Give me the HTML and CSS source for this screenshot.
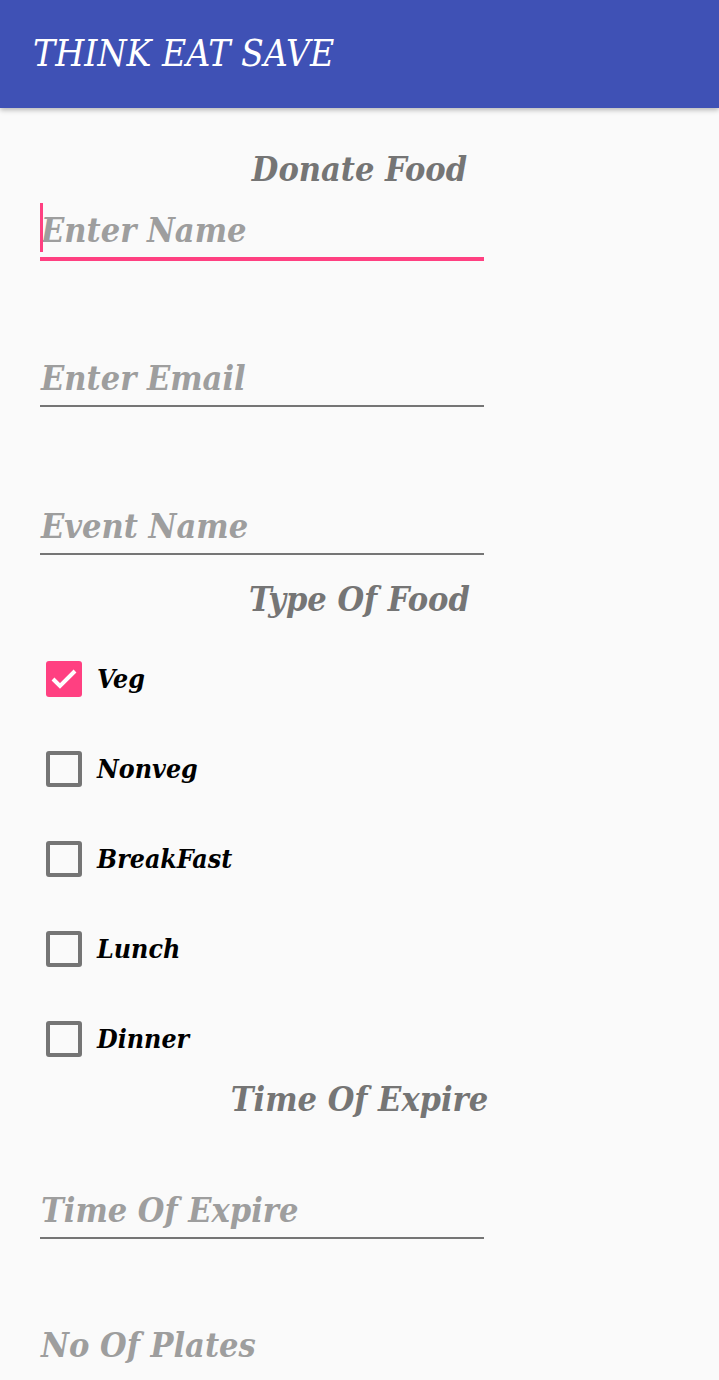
FILE: index.html
```html
<!DOCTYPE html>
<html lang="en">
<head>
<meta charset="utf-8">
<title>Think Eat Save</title>
<link rel="stylesheet" href="styles.css">
</head>
<body>
<header class="appbar">
  <h1 class="appbar-title">THINK EAT SAVE</h1>
</header>
<main class="form">
  <h2 class="section-title">Donate Food</h2>
  <div class="field field-first">
    <div class="input input-focused"><span class="hint">Enter Name</span></div>
  </div>
  <div class="field">
    <div class="input"><span class="hint">Enter Email</span></div>
  </div>
  <div class="field">
    <div class="input"><span class="hint">Event Name</span></div>
  </div>
  <h2 class="section-title section-type">Type Of Food</h2>
  <ul class="checks">
    <li class="check-row">
      <span class="box box-checked">
        <svg viewBox="0 0 36 36" width="36" height="36"><polyline points="7,18 14,25 29,10" fill="none" stroke="#ffffff" stroke-width="4"/></svg>
      </span>
      <span class="check-label">Veg</span>
    </li>
    <li class="check-row"><span class="box"></span><span class="check-label">Nonveg</span></li>
    <li class="check-row"><span class="box"></span><span class="check-label">BreakFast</span></li>
    <li class="check-row"><span class="box"></span><span class="check-label">Lunch</span></li>
    <li class="check-row"><span class="box"></span><span class="check-label">Dinner</span></li>
  </ul>
  <h2 class="section-title">Time Of Expire</h2>
  <div class="field field-time">
    <div class="input"><span class="hint">Time Of Expire</span></div>
  </div>
  <div class="field field-plates">
    <div class="input input-tall"><span class="hint">No Of Plates</span></div>
  </div>
</main>
</body>
</html>
```
FILE: styles.css
```css
html, body {
  margin: 0;
  padding: 0;
  background: #fafafa;
  height: 1380px;
  overflow: hidden;
}
body {
  font-family: "DejaVu Serif Condensed", "DejaVu Serif", "Liberation Serif", serif;
  font-stretch: condensed;
  font-style: italic;
}
.appbar {
  position: relative;
  z-index: 1;
  height: 108px;
  background: #3f51b5;
  box-shadow: 0 2px 5px rgba(0, 0, 0, 0.28);
  display: flex;
  align-items: center;
  padding-left: 33px;
}
.appbar-title {
  margin: 0;
  color: #ffffff;
  font-size: 37px;
  font-weight: normal;
  line-height: 48px;
}
.form {
  padding-top: 37px;
}
.section-title {
  margin: 0;
  text-align: center;
  font-size: 34px;
  line-height: 48px;
  font-weight: bold;
  color: #757575;
}
.section-type {
  margin-top: 20px;
}
.field {
  margin: 95px 0 0 40px;
  width: 444px;
}
.field-first {
  margin-top: 13px;
}
.field-time {
  margin-top: 63px;
}
.field-plates {
  margin-top: 82px;
}
.input {
  position: relative;
  font-size: 34px;
  line-height: 48px;
  font-weight: bold;
  padding: 0 0 3px 1px;
  border-bottom: 2px solid #757575;
}
.input-tall {
  padding-bottom: 30px;
}
.input-focused {
  border-bottom-color: #ff4081;
  box-shadow: 0 2px 0 #ff4081;
}
.input-focused::before {
  content: "";
  position: absolute;
  left: 0;
  top: -3px;
  width: 3px;
  height: 49px;
  background: #ff4081;
}
.hint {
  color: #9e9e9e;
}
.checks {
  list-style: none;
  margin: 20px 0 0 46px;
  padding: 0;
  display: flex;
  flex-direction: column;
  gap: 18px;
}
.check-row {
  height: 72px;
  display: flex;
  align-items: center;
  gap: 15px;
}
.box {
  box-sizing: border-box;
  width: 36px;
  height: 36px;
  border: 4px solid #757575;
  border-radius: 3px;
  flex: none;
}
.box-checked {
  border: none;
  background: #ff4081;
}
.box svg {
  display: block;
}
.check-label {
  font-size: 26.5px;
  line-height: 36px;
  font-weight: bold;
  color: #000000;
}
```
